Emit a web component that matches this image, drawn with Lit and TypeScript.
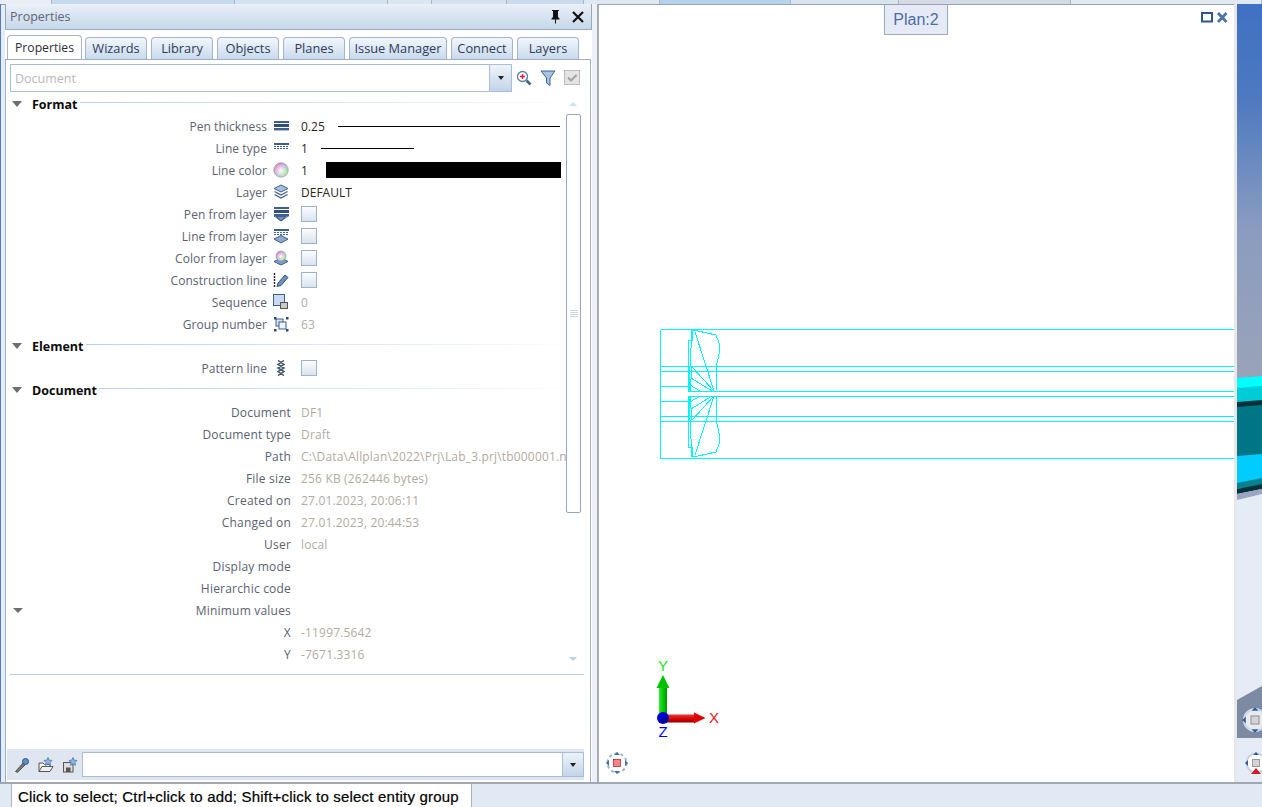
import { LitElement, html, css, svg, nothing } from "lit";
import { customElement } from "lit/decorators.js";

const box = (c: unknown, w = 16, h = 16) => html`<svg width=${w} height=${h} viewBox="0 0 ${w} ${h}">${c}</svg>`;

const penBars = svg`<rect x="1" y="1" width="15" height="2" fill="#3e5f90"/><rect x="1" y="4" width="15" height="3" fill="#2f4f80"/><rect x="1" y="8" width="15" height="2.4" fill="#3e5f90"/>`;
const dashBars = svg`<rect x="1" y="1" width="15" height="2" fill="#3e5f90"/><path d="M1 4.500h15M1 6.500h15" stroke="#3e5f90" stroke-dasharray="2 1"/>`;

const icons: Record<string, unknown> = {
  pen: box(svg`<g transform="translate(0 2)">${penBars}</g>`),
  line: box(svg`<g transform="translate(0 2)">${dashBars}</g>`),
  color: box(svg`<defs>
      <linearGradient id="rb" x1="0" y1="0" x2="1" y2="1"><stop offset="0" stop-color="#e87a7a"/><stop offset=".4" stop-color="#d6a0e8"/><stop offset=".7" stop-color="#9cdca8"/><stop offset="1" stop-color="#e0d080"/></linearGradient>
      <radialGradient id="rw" cx=".5" cy=".55" r=".5"><stop offset="0" stop-color="#fff"/><stop offset=".35" stop-color="#fff" stop-opacity=".6"/><stop offset="1" stop-color="#fff" stop-opacity="0"/></radialGradient>
    </defs><circle cx="8" cy="8" r="7.200" fill="url(#rb)" stroke="#8a96a8" stroke-width=".7"/><circle cx="8" cy="8" r="7" fill="url(#rw)"/>`),
  layer: box(svg`<path d="M8 1 15 4.500 8 8 1 4.500Z" fill="#a8bfdc" stroke="#3f5f8c"/><path d="M1.500 7.500 8 11l6.500-3.500M1.500 10.500 8 14l6.500-3.500" fill="none" stroke="#3f5f8c" stroke-width="1.300"/>`),
  penLayer: box(svg`${penBars}<path d="M3 10.500h10L8 15Z" fill="#6f90bd" stroke="#3f5f8c"/><path d="M1 10 8 15 15 10" fill="none" stroke="#3f5f8c"/>`),
  lineLayer: box(svg`${dashBars}<path d="M8 7.500 15 11 8 15 1 11Z" fill="#8fa9cc" stroke="#3f5f8c"/>`),
  colorLayer: box(svg`<path d="M8 8 15 11.500 8 15 1 11.500Z" fill="#7f9cc4" stroke="#3f5f8c"/><circle cx="8" cy="6" r="5" fill="url(#rb)" stroke="#8a96a8" stroke-width=".6"/><circle cx="8" cy="6" r="4.500" fill="url(#rw)"/>`),
  construction: box(svg`<path d="M1.500 1v15" stroke="#222" stroke-width="1.400" stroke-dasharray="2 1"/><path d="M5 11 12 3l3 2.500-7 8-4 1Z" fill="#6f90bd" stroke="#34547f"/>`),
  sequence: box(svg`<rect x=".5" y=".5" width="11" height="11" fill="#c9daf0" stroke="#3f5f8c"/><rect x="7.500" y="8.500" width="7" height="6" fill="#c8c8c8" stroke="#555"/>`),
  group: box(svg`<rect x="3" y="3" width="7" height="7" fill="#d6e3f3" stroke="#3f5f8c"/><rect x="6" y="6" width="7" height="7" fill="#eef3fa" stroke="#3f5f8c"/><g fill="#2d4a72"><rect x="1" y="1" width="2.500" height="2.500"/><rect x="13" y="1" width="2.500" height="2.500"/><rect x="1" y="13" width="2.500" height="2.500"/><rect x="13" y="13" width="2.500" height="2.500"/></g>`),
  pattern: box(svg`<path d="M5 .5l6 4-6 3.500 6 3.500-6 4M11 .5l-6 4 6 3.500-6 3.500 6 4" fill="none" stroke="#45586f" stroke-width="1.500"/>`),
};

interface Row { label: string; icon?: string; value?: string; muted?: boolean; check?: boolean; line?: number; lineGap?: number; block?: boolean; sub?: boolean }

const format: Row[] = [
  { label: "Pen thickness", icon: "pen", value: "0.25", line: 222, lineGap: 13 },
  { label: "Line type", icon: "line", value: "1", line: 93, lineGap: 13 },
  { label: "Line color", icon: "color", value: "1", block: true },
  { label: "Layer", icon: "layer", value: "DEFAULT" },
  { label: "Pen from layer", icon: "penLayer", check: true },
  { label: "Line from layer", icon: "lineLayer", check: true },
  { label: "Color from layer", icon: "colorLayer", check: true },
  { label: "Construction line", icon: "construction", check: true },
  { label: "Sequence", icon: "sequence", value: "0", muted: true },
  { label: "Group number", icon: "group", value: "63", muted: true },
];
const docRows: Row[] = [
  { label: "Document", value: "DF1" },
  { label: "Document type", value: "Draft" },
  { label: "Path", value: "C:\\Data\\Allplan\\2022\\Prj\\Lab_3.prj\\tb000001.n" },
  { label: "File size", value: "256 KB (262446 bytes)" },
  { label: "Created on", value: "27.01.2023, 20:06:11" },
  { label: "Changed on", value: "27.01.2023, 20:44:53" },
  { label: "User", value: "local" },
  { label: "Display mode", value: "" },
  { label: "Hierarchic code", value: "" },
  { label: "Minimum values", sub: true },
  { label: "X", value: "-11997.5642" },
  { label: "Y", value: "-7671.3316" },
];
const tabs: [string, number][] = [["Wizards", 62], ["Library", 62], ["Objects", 62], ["Planes", 62], ["Issue Manager", 98], ["Connect", 62], ["Layers", 62]];
const topSegs: [number, string][] = [[52, "#e9eef5"], [183, "#c4d9ee"], [153, "#d3e2f0"], [44, "#dbe6f0"], [75, "#d6e3ef"], [77, "#c9dbec"], [76, "#dfe7f0"], [131, "#b5d3ec"], [108, "#d9e5ee"], [172, "#d4dbe4"], [191, "#e3e9f1"]];

const hull = svg`
  <path d="M692 330 698 331 716 335 719 343 720 350 717 363 716 391 688 391 688 340 692 340Z"/>
  <path d="M692 330 690 367 689.500 391M695 332 714 391M692 367 714 391M691 378 712 391M690 385 700 391M692 367 690 391"/>`;

const nav = () => svg`
  <circle r="9.500" fill="#fff" stroke="#9fb3cc" stroke-width="2" stroke-dasharray="3 3"/>
  <g fill="#3f6ea8"><path d="M-3 -8h6l-3 -3zM-3 8h6l-3 3zM-8 -3v6l-3 -3zM8 -3v6l3 -3z"/></g>
  <rect x="-3.500" y="-3.500" width="7" height="7" fill="#ef8a8f" stroke="#c0262c" stroke-width=".8"/>`;

@customElement("app-root")
export class AppRoot extends LitElement {
  static styles = css`
    :host { display: grid; grid-template-rows: 4px 778px 25px; width: 1262px; height: 807px; overflow: hidden;
      background: #e6ecf5; font: 12px "Open Sans", "Noto Sans", sans-serif; color: #5a6270; }
    svg { display: block; }
    .top { display: flex; border-bottom: 1px solid #98a2b3; height: 4px; }
    .top i { display: block; height: 100%; border-right: 1px solid #a9b7c8; box-sizing: border-box; }
    .main { display: flex; min-height: 0; border-left: 1px solid #4f7cbd; }
    .panel { width: 587px; margin-left: 4px; display: flex; flex-direction: column; background: #fff; }
    .title { height: 26px; box-sizing: border-box; display: flex; align-items: center; padding: 0 7px 0 4px; gap: 10px;
      background: linear-gradient(#eaf0f8, #c6d7ea); border: solid #9aa8bb; border-width: 0 1px 1px 1px; font-size: 12.5px; color: #5f6773; }
    .title span { flex: 1; }
    .tabs { height: 29px; display: flex; align-items: flex-end; gap: 4px; padding-left: 2px; box-sizing: border-box; }
    .tab { height: 22px; box-sizing: border-box; border: 1px solid #a3b5cf; border-bottom: 0; border-radius: 4px 4px 0 0; font-size: 12.8px; padding-bottom: 2px;
      background: linear-gradient(#f2f6fb, #c9daee); color: #2f3b57; display: flex; align-items: center; justify-content: center; }
    .tab.on { width: 75px; height: 24px; background: #fff; color: #2a2f3a; margin-right: -1px; padding-bottom: 1px; font-size: 12.2px; }
    .body { flex: 1; min-height: 0; border: solid #9fb0c8; border-width: 1px 1px 0 1px; margin-right: 1px; display: flex; flex-direction: column; position: relative; }
    .tools { height: 33px; box-sizing: border-box; padding: 2px 0 0 4px; display: flex; align-items: center; flex: none; }
    .combo { width: 502px; height: 28px; box-sizing: border-box; border: 1px solid #a9bcd8; display: flex; background: #fff; }
    .combo span { flex: 1; padding: 0 4px; line-height: 28px; color: #b9b9b9; font-size: 12.5px; }
    .drop { width: 21px; border-left: 1px solid #a9bcd8; background: linear-gradient(#eef3f9, #c3d4e9); display: flex; align-items: center; justify-content: center; }
    .drop b { border: 3.5px solid transparent; border-top: 4px solid #222; border-bottom: 0; }
    .tools .ic { margin-left: 4px; width: 20px; display: flex; justify-content: center; }
    .tools .ic.first { margin-left: 2px; }
    .rows { height: 566px; flex: none; position: relative; }
    .row { height: 22px; display: grid; align-items: center; white-space: nowrap; position: relative; }
    .row.f { grid-template-columns: 261px 6px 16px 12px 1fr; }
    .row.d { grid-template-columns: 285px 10px 270px; }
    .lab { text-align: right; letter-spacing: .2px; }
    .row.f .lab { letter-spacing: .07px; }
    .val { color: #2c2620; display: flex; align-items: center; min-width: 0; overflow: hidden; }
    .row.d .val, .val.m { color: #b3ab9f; letter-spacing: .17px; }
    .ln { height: 1px; background: #000; flex: none; }
    .blk { height: 16px; width: 235px; background: #000; margin-left: 18px; flex: none; }
    .chk { width: 16px; height: 16px; box-sizing: border-box; border: 1px solid #9fb2cc; background: linear-gradient(#fbfcfe, #dae3ef); }
    .sec { height: 22px; display: flex; align-items: center; padding-left: 6px; gap: 10px; color: #0c0c0c; font-weight: 700; font-size: 12.5px; }
    .sec u { flex: none; width: 0; border: 5.5px solid transparent; border-top: 6px solid #6e6e6e; border-bottom: 0; }
    .sec em { flex: 1; height: 1px; margin: 0 7px 3px -8px; background: linear-gradient(90deg, #b9d0ea, #e9f0f8 70%, #fff); }
    .sub { position: absolute; left: 7px; top: 9px; }
    .sub u { display: block; width: 0; border: 5.5px solid transparent; border-top: 5px solid #6e6e6e; border-bottom: 0; }
    .sb { position: absolute; left: 560px; top: 0; width: 15px; height: 566px; }
    .thumb { position: absolute; top: 21px; width: 15px; height: 399px; box-sizing: border-box; border: 1px solid #94a6c1; border-radius: 2px; background: #fff; }
    .grip { position: absolute; left: 3px; width: 8px; top: 195px; height: 7px; background: repeating-linear-gradient(#cfd9e6 0 1px, #fff 1px 2px); }
    .ar { position: absolute; left: 3px; width: 0; border: 4px solid transparent; }
    .ar.up { top: 9px; border-top: 0; border-bottom: 4px solid #cfe0f2; }
    .ar.dn { top: 564px; border-bottom: 0; border-top: 4px solid #bcd3ec; }
    .sep { height: 1px; background: #b3cfe8; margin: 15px 6px 0 4px; flex: none; }
    .spacer { flex: 1; }
    .bottom { height: 31px; flex: none; margin: 0 6px 2px 1px; background: #dfe6f1; display: flex; align-items: center; gap: 6px; padding-left: 5px; box-sizing: border-box; }
    .bottom .ic { width: 20px; display: flex; justify-content: center; margin-right: -2px; }
    .entry { flex: 1; height: 25px; box-sizing: border-box; margin-left: -2px; border: 1px solid #a9bcd8; background: #fff; display: flex; justify-content: flex-end; }
    .entry .drop { width: 20px; }
    .gapc { width: 5px; background: #edf1f7; }
    .view { width: 637px; position: relative; background: #fff; border-left: 2px solid #a9acb3; border-top: 1px solid #9aa2b3; box-sizing: border-box; }
    .canvas { position: absolute; left: 0; top: 0; }
    .ctl { left: 602px; top: 7px; }
    .plan { position: absolute; left: 285px; top: 0; width: 64px; height: 30px; box-sizing: border-box; border: 1px solid #9dabc4; border-top: 0;
      background: #e6eaf6; color: #4a6ea6; font: 16px "Liberation Sans", Arial, sans-serif; display: flex; align-items: center; justify-content: center; }
    .right { width: 25px; border-left: 3px solid #e8e8e8; }
    .status { border-top: 2px solid #a2a8b3; background: #e1e9f4; display: flex; padding-left: 11px; box-sizing: border-box; }
    .status div { width: 461px; box-sizing: border-box; background: #fff; border: solid #b0b4bb; border-width: 0 1px 0 1px; padding-left: 6px; color: #000;
      font: 15px/26px "Liberation Sans", Arial, sans-serif; letter-spacing: .2px; white-space: nowrap; -webkit-text-stroke: .2px #000; }
  `;

  private renderRow(r: Row) {
    if (r.icon) {
      return html`<div class="row f">
        <span class="lab">${r.label}</span><span></span><span>${icons[r.icon]}</span><span></span>
        ${r.check ? html`<span class="chk"></span>` : html`<span class="val ${r.muted ? "m" : ""}">${r.value}
          ${r.line ? html`<span class="ln" style="width:${r.line}px;margin-left:${r.lineGap}px"></span>` : nothing}
          ${r.block ? html`<span class="blk"></span>` : nothing}</span>`}
      </div>`;
    }
    return html`<div class="row d">
      ${r.sub ? html`<span class="sub"><u></u></span>` : nothing}
      <span class="lab">${r.label}</span><span></span><span class="val">${r.value}</span>
    </div>`;
  }

  private sec(t: string) { return html`<div class="sec"><u></u><span>${t}</span><em></em></div>`; }

  render() {
    return html`
      <div class="top">${topSegs.map(([w, c]) => html`<i style="width:${w}px;background:${c}"></i>`)}</div>
      <div class="main">
        <section class="panel">
          <div class="title"><span>Properties</span>
            ${box(svg`<path d="M4 1h7v1h-1v6l1.500 1.500v1H8v4H7v-4H3.500v-1L5 8V2H4Z" fill="#111"/>`, 14, 16)}
            ${box(svg`<path d="M1 1l10 10M11 1 1 11" stroke="#111" stroke-width="2.200"/>`, 12, 12)}
          </div>
          <div class="tabs">
            <div class="tab on">Properties</div>
            ${tabs.map(([t, w]) => html`<div class="tab" style="width:${w}px">${t}</div>`)}
          </div>
          <div class="body">
            <div class="tools">
              <div class="combo"><span>Document</span><div class="drop"><b></b></div></div>
              <div class="ic first">${box(svg`<circle cx="6.500" cy="6.500" r="5" fill="#fff" stroke="#5a7fa8" stroke-width="1.300"/><path d="M4 6.500h5M6.500 4v5" stroke="#e0202a" stroke-width="1.500"/><path d="M10.500 10.500l4 4" stroke="#3c668f" stroke-width="2.600"/>`)}</div>
              <div class="ic">${box(svg`<path d="M1 1h14L10 8v7.500L6.500 13V8Z" fill="#a8c4e2" stroke="#39638f"/>`)}</div>
              <div class="ic">${box(svg`<rect x=".5" y=".5" width="15" height="14" fill="#e4e4e4" stroke="#bdbdbd"/><path d="M4 7.500l3 3 5.500-5.500" fill="none" stroke="#a2a2a2" stroke-width="2"/>`)}</div>
            </div>
            <div class="rows">
              ${this.sec("Format")}
              ${format.map((r) => this.renderRow(r))}
              ${this.sec("Element")}
              ${this.renderRow({ label: "Pattern line", icon: "pattern", check: true })}
              ${this.sec("Document")}
              ${docRows.map((r) => this.renderRow(r))}
              <div class="sb"><div class="ar up"></div><div class="thumb"><div class="grip"></div></div><div class="ar dn"></div></div>
            </div>
            <div class="sep"></div>
            <div class="spacer"></div>
            <div class="bottom">
              <div class="ic">${box(svg`<path d="M1.500 14.500 9 6l2 2-7.500 7.500Z" fill="#777" stroke="#444" stroke-width=".8"/><circle cx="11.500" cy="4.500" r="3" fill="#5d8fc6" stroke="#2f567f"/>`)}</div>
              <div class="ic">${box(svg`<path d="M1 14.500V6h4l1.500 1.500H12v2M1 14.500 4 9.500h11l-3 5Z" fill="#f1f1f1" stroke="#555"/><path d="M10 .5l1.300 2.700 2.700.3-2 2 .5 2.800L10 7l-2.500 1.300.5-2.800-2-2 2.700-.3Z" fill="#8db5e0" stroke="#3f6ea0" stroke-width=".7"/>`)}</div>
              <div class="ic">${box(svg`<rect x="1.500" y="5.500" width="9.500" height="9.500" fill="#dcdcdc" stroke="#555"/><rect x="4" y="10.500" width="4.500" height="4.500" fill="#555"/><path d="M11 .5l1.300 2.700 2.700.3-2 2 .5 2.800L11 7l-2.500 1.300.5-2.800-2-2 2.700-.3Z" fill="#8db5e0" stroke="#3f6ea0" stroke-width=".7"/>`)}</div>
              <div class="entry"><div class="drop"><b></b></div></div>
            </div>
          </div>
        </section>
        <div class="gapc"></div>
        <div class="view">
          <svg class="canvas" width="635" height="777" viewBox="599 5 635 777">
            <g fill="none" stroke="#00f6f6" stroke-width="1" shape-rendering="crispEdges">
              <path d="M660.500 329.500H1234M660.500 458.500H1234M660.500 329.500V458.500M660.500 366.500H1234M660.500 371.500H1234M660.500 386.500H688M688 391.500H1234M688 396.500H1234M660.500 401.500H688M660.500 416.500H1234M660.500 421.500H1234"/>
              ${hull}
              <g transform="matrix(1 0 0 -1 0 787)">${hull}</g>
            </g>
            <defs>
              <linearGradient id="gy" x1="0" x2="1" y1="0" y2="0"><stop offset="0" stop-color="#39e339"/><stop offset=".5" stop-color="#00d000"/><stop offset="1" stop-color="#008f00"/></linearGradient>
              <linearGradient id="rx" x1="0" x2="0" y1="0" y2="1"><stop offset="0" stop-color="#e63a3a"/><stop offset=".6" stop-color="#d40000"/><stop offset="1" stop-color="#8f0000"/></linearGradient>
            </defs>
            <path d="M659 688h8v26h-8z" fill="url(#gy)"/><path d="M663 675l6.500 13h-13z" fill="#00c000"/>
            <path d="M666 714.500h28v8h-28z" fill="url(#rx)"/><path d="M694 712.500l11.500 5.500-11.500 5.500z" fill="#e00000"/>
            <circle cx="663" cy="718" r="6" fill="#0000d0"/><path d="M659 722a6 6 0 0 0 9-6z" fill="#00008a"/>
            <text x="663" y="671" text-anchor="middle" font-family="Liberation Sans" font-size="15" fill="#19e619">Y</text>
            <text x="714" y="723" text-anchor="middle" font-family="Liberation Sans" font-size="15" fill="#e82020">X</text>
            <text x="663" y="737" text-anchor="middle" font-family="Liberation Sans" font-size="15" fill="#0000f0">Z</text>
            <g transform="translate(617 763)">${nav()}</g>
          </svg>
          <div class="plan">Plan:2</div>
          <svg class="canvas ctl" width="28" height="12" viewBox="0 0 28 12">
            <rect x="1" y="1" width="10" height="8.500" fill="none" stroke="#2f5590" stroke-width="2"/>
            <path d="M17 1l8.500 9M25.500 1 17 10" stroke="#4a75a5" stroke-width="2.800"/>
          </svg>
        </div>
        <div class="right">
          <svg width="25" height="778" viewBox="1237 4 25 778">
            <defs><linearGradient id="sky" x1="0" x2="0" y1="0" y2="1"><stop offset="0" stop-color="#3f70c2"/><stop offset=".25" stop-color="#4d79c0"/><stop offset=".6" stop-color="#8a9cc0"/><stop offset="1" stop-color="#9aa3b8"/></linearGradient></defs>
            <rect x="1237" y="4" width="25" height="374" fill="url(#sky)"/>
            <path d="M1237 378l25-2v13l-25 1z" fill="#00ffff"/>
            <path d="M1237 388l25-2v15l-25 2z" fill="#00ccd8"/>
            <path d="M1237 402l25-2v6l-25 2z" fill="#04323a"/>
            <path d="M1237 407l25-2v52l-25 0z" fill="#007585"/>
            <path d="M1237 456l25-2v28l-25 2z" fill="#00ccff"/>
            <path d="M1237 483l25-5v8l-25 3z" fill="#0a8090"/>
            <path d="M1237 489l25-5v5l-25 5z" fill="#04323a"/>
            <path d="M1237 494l25-5v5l-25 6z" fill="#9aa5c2"/>
            <path d="M1237 700l25-14v52h-25z" fill="#7c8aa3"/>
            <g transform="translate(1255 720) scale(1.150)"><circle r="9.500" fill="#e8ecf2" stroke="#cfd9e6" stroke-width="2"/><path d="M-3 -8h6l-3 -3zM-3 8h6l-3 3zM-8 -3v6l-3 -3zM8 -3v6l3 -3z" fill="#2f5f9f"/><rect x="-3.500" y="-3.500" width="7" height="7" fill="#d4d4d4" stroke="#999"/></g>
            <g transform="translate(1256 763)"><circle r="9.500" fill="#fff" stroke="#c7d3e2" stroke-width="2"/><path d="M-3 -8h6l-3 -3zM-8 -3v6l-3 -3zM8 -3v6l3 -3z" fill="#2f5f9f"/><path d="M-5 11l5-6 5 6z" fill="#d01c25"/><rect x="-3.500" y="-3.500" width="7" height="7" fill="#d4d4d4" stroke="#999"/></g>
          </svg>
        </div>
      </div>
      <div class="status"><div>Click to select; Ctrl+click to add; Shift+click to select entity group</div></div>
    `;
  }
}
